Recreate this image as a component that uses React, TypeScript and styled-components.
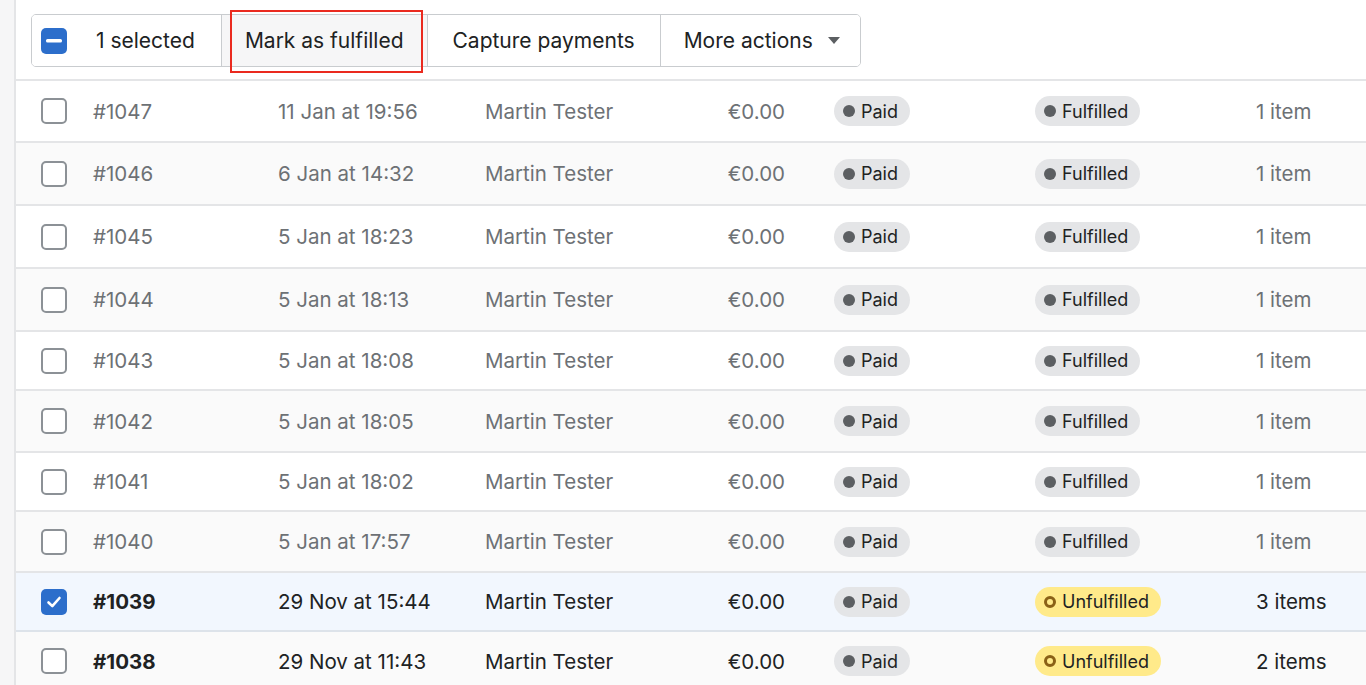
import styled, { createGlobalStyle } from "styled-components";

const GlobalStyle = createGlobalStyle`
  html, body {
    margin: 0;
    padding: 0;
    background: #ffffff;
    font-family: "Inter", "Noto Sans", "Liberation Sans", sans-serif;
    overflow: hidden;
  }
`;

interface Order {
  id: number;
  date: string;
  customer: string;
  total: string;
  payment: string;
  fulfilled: boolean;
  items: string;
  checked?: boolean;
  unread?: boolean;
  height: number;
}

const orders: Order[] = [
  { id: 1047, date: "11 Jan at 19:56", customer: "Martin Tester", total: "€0.00", payment: "Paid", fulfilled: true, items: "1 item", height: 62 },
  { id: 1046, date: "6 Jan at 14:32", customer: "Martin Tester", total: "€0.00", payment: "Paid", fulfilled: true, items: "1 item", height: 63 },
  { id: 1045, date: "5 Jan at 18:23", customer: "Martin Tester", total: "€0.00", payment: "Paid", fulfilled: true, items: "1 item", height: 63 },
  { id: 1044, date: "5 Jan at 18:13", customer: "Martin Tester", total: "€0.00", payment: "Paid", fulfilled: true, items: "1 item", height: 63 },
  { id: 1043, date: "5 Jan at 18:08", customer: "Martin Tester", total: "€0.00", payment: "Paid", fulfilled: true, items: "1 item", height: 59 },
  { id: 1042, date: "5 Jan at 18:05", customer: "Martin Tester", total: "€0.00", payment: "Paid", fulfilled: true, items: "1 item", height: 62 },
  { id: 1041, date: "5 Jan at 18:02", customer: "Martin Tester", total: "€0.00", payment: "Paid", fulfilled: true, items: "1 item", height: 59 },
  { id: 1040, date: "5 Jan at 17:57", customer: "Martin Tester", total: "€0.00", payment: "Paid", fulfilled: true, items: "1 item", height: 61 },
  { id: 1039, date: "29 Nov at 15:44", customer: "Martin Tester", total: "€0.00", payment: "Paid", fulfilled: false, items: "3 items", checked: true, unread: true, height: 59 },
  { id: 1038, date: "29 Nov at 11:43", customer: "Martin Tester", total: "€0.00", payment: "Paid", fulfilled: false, items: "2 items", unread: true, height: 60 },
];

const Page = styled.div`
  display: flex;
  min-height: 685px;
`;

const Rail = styled.div`
  width: 14px;
  flex: none;
  background: #f6f6f7;
  border-right: 2px solid #e4e5e7;
`;

const Main = styled.div`
  flex: 1;
  display: flex;
  flex-direction: column;
`;

const BulkBar = styled.div`
  position: relative;
  padding: 14px 0 12px 15px;
  border-bottom: 2px solid #e4e5e7;
`;

const ButtonGroup = styled.div`
  display: inline-flex;
  height: 53px;
  box-sizing: border-box;
  border: 1px solid #c9cccf;
  border-radius: 5px;
  overflow: hidden;
  background: #ffffff;
`;

const Segment = styled.div<{ $pressed?: boolean; $pl?: number; $pr?: number }>`
  display: flex;
  align-items: center;
  gap: 29px;
  padding: 0 ${(p) => p.$pr ?? 23}px 0 ${(p) => p.$pl ?? 23}px;
  font-size: 21px;
  color: #202223;
  background: ${(p) => (p.$pressed ? "#f6f6f7" : "#ffffff")};
  & + & {
    border-left: 1px solid #c9cccf;
  }
`;

const Caret = styled.span`
  width: 0;
  height: 0;
  margin-left: -14px;
  border-left: 6.5px solid transparent;
  border-right: 6.5px solid transparent;
  border-top: 7px solid #5c5f62;
`;

const Highlight = styled.div`
  position: absolute;
  left: 214px;
  top: 10px;
  width: 189px;
  height: 59px;
  border: 2px solid #ea2a1f;
  pointer-events: none;
`;

const Box = styled.span<{ $on?: boolean }>`
  display: inline-flex;
  align-items: center;
  justify-content: center;
  width: 26px;
  height: 26px;
  box-sizing: border-box;
  border-radius: 5px;
  border: ${(p) => (p.$on ? "none" : "2px solid #8c9196")};
  background: ${(p) => (p.$on ? "#2c6ecb" : "#ffffff")};
`;

const Row = styled.div<{ $alt?: boolean; $selected?: boolean; $unread?: boolean }>`
  display: grid;
  grid-template-columns: 52px 185px 207px 215px 85px 250px 221px 1fr;
  align-items: center;
  padding-left: 25px;
  box-sizing: border-box;
  border-bottom: 2px solid ${(p) => (p.$selected ? "#dde3ea" : "#e4e5e7")};
  background: ${(p) => (p.$selected ? "#f2f7fe" : p.$alt ? "#fafafa" : "#ffffff")};
  font-size: 20.5px;
  color: ${(p) => (p.$unread ? "#202223" : "#6d7175")};
`;

const Cell = styled.div<{ $right?: boolean; $bold?: boolean; $pl?: number }>`
  white-space: nowrap;
  font-weight: ${(p) => (p.$bold ? 700 : 400)};
  padding-left: ${(p) => p.$pl ?? 0}px;
  display: flex;
  justify-content: ${(p) => (p.$right ? "flex-end" : "flex-start")};
`;

const Badge = styled.span<{ $warn?: boolean }>`
  display: inline-flex;
  align-items: center;
  gap: 6px;
  height: 30px;
  padding: 0 12px 0 9px;
  border-radius: 15px;
  font-size: 18px;
  color: #202223;
  background: ${(p) => (p.$warn ? "#ffea8a" : "#e4e5e7")};
`;

const Dot = styled.span<{ $ring?: boolean }>`
  width: 12px;
  height: 12px;
  box-sizing: border-box;
  border-radius: 50%;
  background: ${(p) => (p.$ring ? "transparent" : "#5c5f62")};
  border: ${(p) => (p.$ring ? "3px solid #8a6116" : "none")};
`;

function App() {
  return (
    <Page>
      <GlobalStyle />
      <Rail />
      <Main>
        <BulkBar>
          <ButtonGroup>
            <Segment $pl={9} $pr={26}>
              <Box $on>
                <svg width="16" height="4" viewBox="0 0 16 4">
                  <rect width="16" height="3.5" rx="1.5" fill="#ffffff" />
                </svg>
              </Box>
              1 selected
            </Segment>
            <Segment $pressed>Mark as fulfilled</Segment>
            <Segment $pl={25} $pr={25}>Capture payments</Segment>
            <Segment $pl={23} $pr={20}>
              More actions
              <Caret />
            </Segment>
          </ButtonGroup>
          <Highlight />
        </BulkBar>
        {orders.map((o, i) => (
          <Row
            key={o.id}
            $alt={i % 2 === 1}
            $selected={o.checked}
            $unread={o.unread}
            style={{ height: o.height }}
          >
            <Cell>
              <Box $on={o.checked}>
                {o.checked && (
                  <svg width="16" height="14" viewBox="0 0 16 14">
                    <path
                      d="M2.5 7.5l3.8 3.6L13.5 3"
                      fill="none"
                      stroke="#ffffff"
                      strokeWidth="2.6"
                      strokeLinecap="round"
                      strokeLinejoin="round"
                    />
                  </svg>
                )}
              </Box>
            </Cell>
            <Cell $bold={o.unread}>#{o.id}</Cell>
            <Cell>{o.date}</Cell>
            <Cell>{o.customer}</Cell>
            <Cell $right>{o.total}</Cell>
            <Cell $pl={49}>
              <Badge>
                <Dot />
                {o.payment}
              </Badge>
            </Cell>
            <Cell>
              {o.fulfilled ? (
                <Badge>
                  <Dot />
                  Fulfilled
                </Badge>
              ) : (
                <Badge $warn>
                  <Dot $ring />
                  Unfulfilled
                </Badge>
              )}
            </Cell>
            <Cell>{o.items}</Cell>
          </Row>
        ))}
      </Main>
    </Page>
  );
}

export default App;
